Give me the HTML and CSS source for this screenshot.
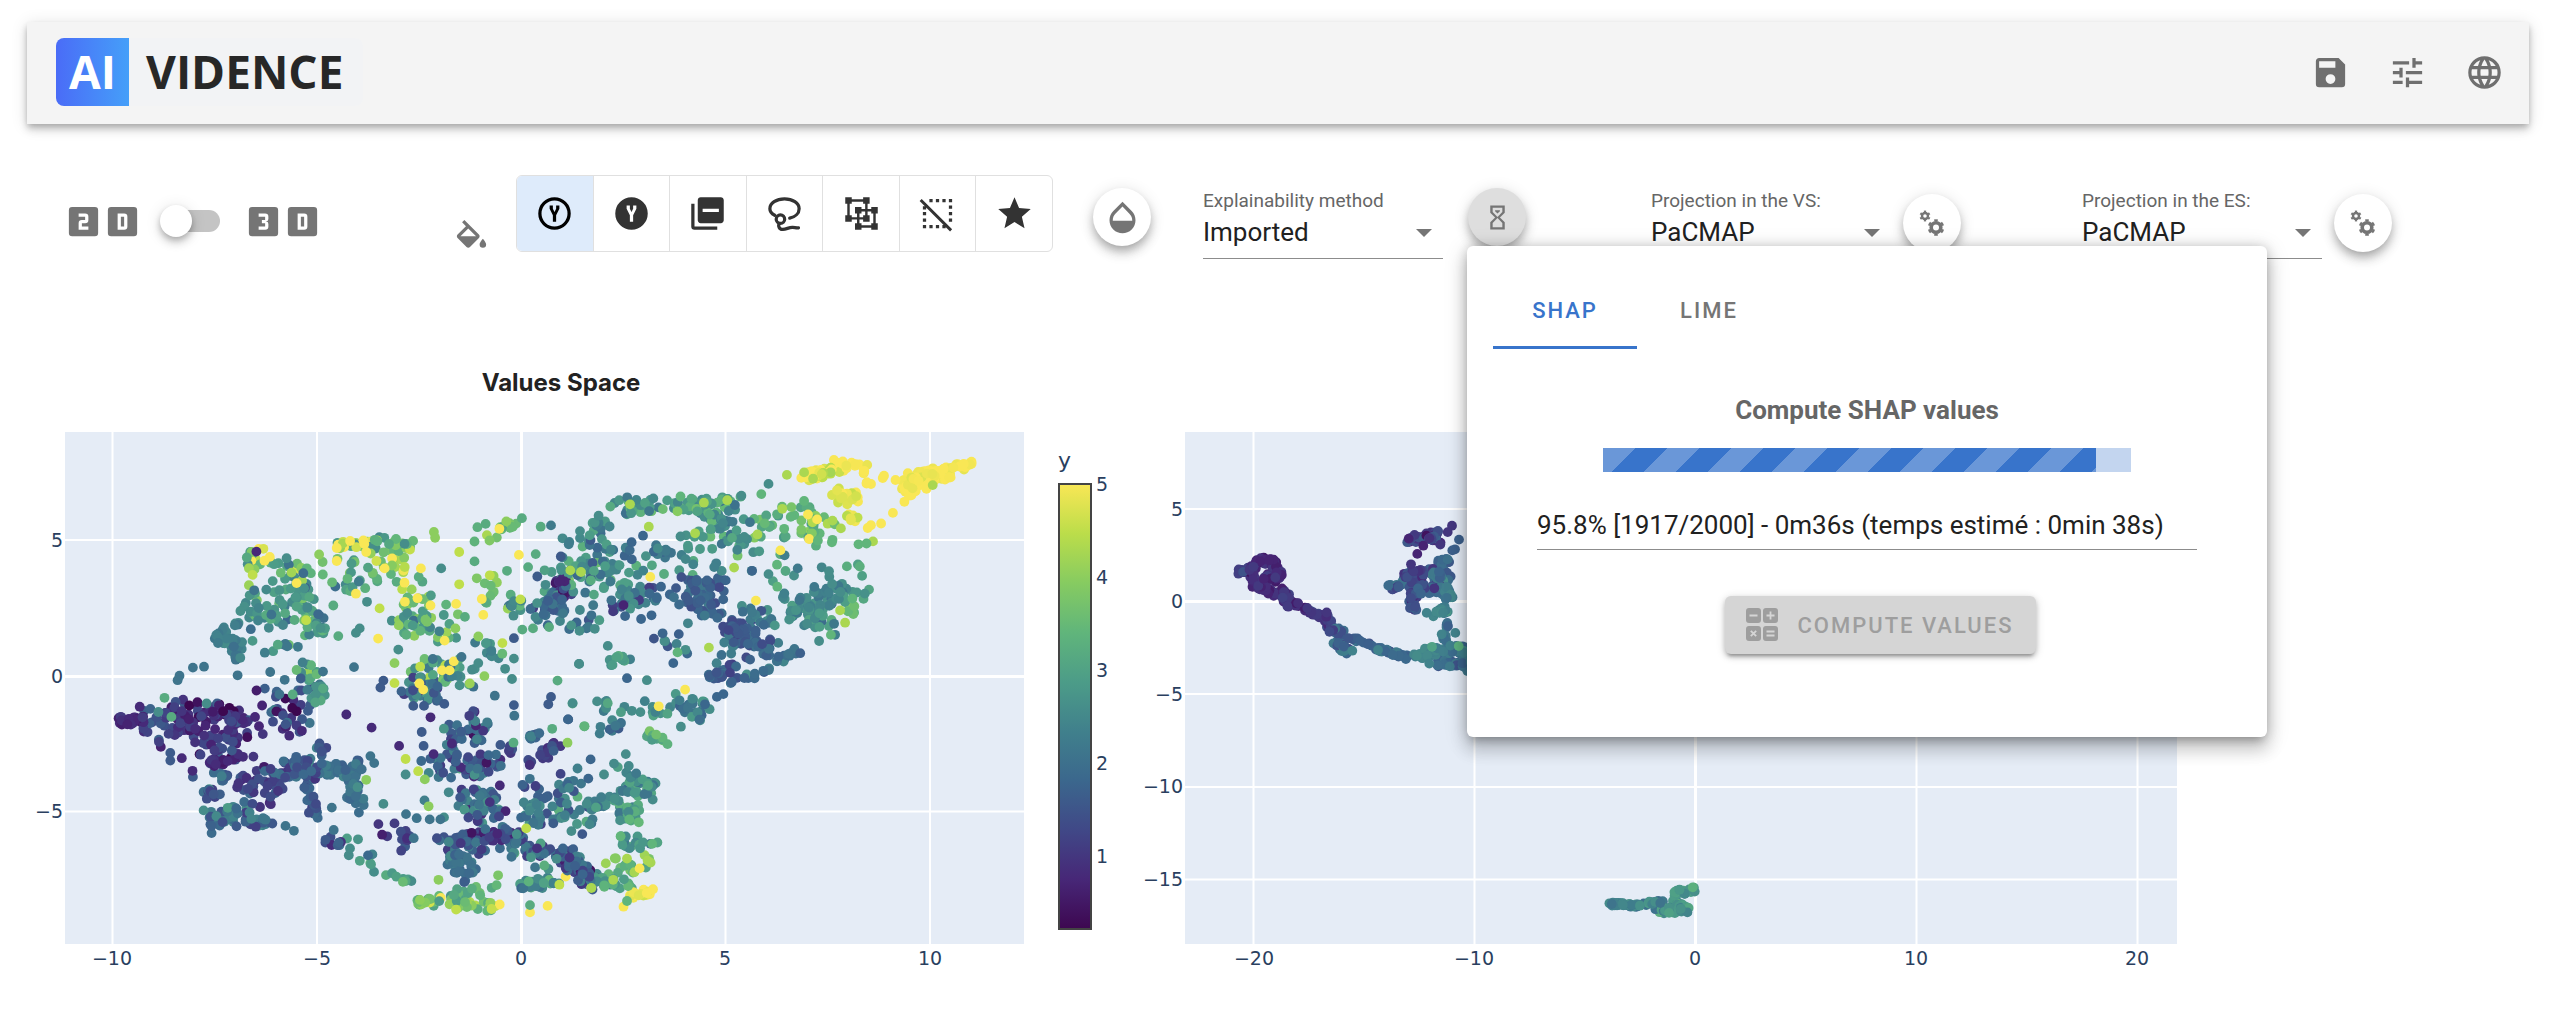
FILE: index.html
```html
<!DOCTYPE html>
<html lang="en">
<head>
<meta charset="utf-8">
<title>AI Vidence</title>
<link rel="stylesheet" href="styles.css">
</head>
<body>
<header class="app-bar">
  <a class="logo" href="#"><span class="logo-mark">AI</span><span class="logo-name">VIDENCE</span></a>
  <nav class="app-actions">
    <button class="icon-button" aria-label="Save"><svg class="icon" viewBox="0 0 24 24"><path d="M15,9H5V5H15M12,19A3,3 0 0,1 9,16A3,3 0 0,1 12,13A3,3 0 0,1 15,16A3,3 0 0,1 12,19M17,3H5C3.89,3 3,3.9 3,5V19A2,2 0 0,0 5,21H19A2,2 0 0,0 21,19V7L17,3Z"/></svg></button>
    <button class="icon-button" aria-label="Settings"><svg class="icon" viewBox="0 0 24 24"><path d="M3,17V19H9V17H3M3,5V7H13V5H3M13,21V19H21V17H13V15H11V21H13M7,9V11H3V13H7V15H9V9H7M21,13V11H11V13H21M15,9H17V7H21V5H17V3H15V9Z"/></svg></button>
    <button class="icon-button" aria-label="Language"><svg class="icon" viewBox="0 0 24 24"><path d="M16.36,14C16.44,13.34 16.5,12.68 16.5,12C16.5,11.32 16.44,10.66 16.36,10H19.74C19.9,10.64 20,11.31 20,12C20,12.69 19.9,13.36 19.74,14M14.59,19.56C15.19,18.45 15.65,17.25 15.97,16H18.92C17.96,17.65 16.43,18.93 14.59,19.56M14.34,14H9.66C9.56,13.34 9.5,12.68 9.5,12C9.5,11.32 9.56,10.65 9.66,10H14.34C14.43,10.65 14.5,11.32 14.5,12C14.5,12.68 14.43,13.34 14.34,14M12,19.96C11.17,18.76 10.5,17.43 10.09,16H13.91C13.5,17.43 12.83,18.76 12,19.96M8,8H5.08C6.03,6.34 7.57,5.06 9.4,4.44C8.8,5.55 8.35,6.75 8,8M5.08,16H8C8.35,17.25 8.8,18.45 9.4,19.56C7.57,18.93 6.03,17.65 5.08,16M4.26,14C4.1,13.36 4,12.69 4,12C4,11.31 4.1,10.64 4.26,10H7.64C7.56,10.66 7.5,11.32 7.5,12C7.5,12.68 7.56,13.34 7.64,14M12,4.03C12.83,5.23 13.5,6.57 13.91,8H10.09C10.5,6.57 11.17,5.23 12,4.03M18.92,8H15.97C15.65,6.75 15.19,5.55 14.59,4.44C16.43,5.07 17.96,6.34 18.92,8M12,2C6.47,2 2,6.5 2,12A10,10 0 0,0 12,22A10,10 0 0,0 22,12A10,10 0 0,0 12,2Z"/></svg></button>
  </nav>
</header>

<main>
<div class="toolbar">
  <div class="dimension">
    <span class="dimension-label">
      <svg class="icon" viewBox="0 0 24 24"><path d="M19,3A2,2 0 0,1 21,5V19A2,2 0 0,1 19,21H5A2,2 0 0,1 3,19V5A2,2 0 0,1 5,3H19M15,11V9A2,2 0 0,0 13,7H9V9H13V11H11A2,2 0 0,0 9,13V17H15V15H11V13H13A2,2 0 0,0 15,11Z"/></svg>
      <svg class="icon" viewBox="0 0 24 24"><path fill-rule="evenodd" d="M19,3A2,2 0 0,1 21,5V19A2,2 0 0,1 19,21H5A2,2 0 0,1 3,19V5A2,2 0 0,1 5,3H19M9,7V17H13A2,2 0 0,0 15,15V9A2,2 0 0,0 13,7H9M11,9H13V15H11V9Z"/></svg>
    </span>
    <input class="switch" type="checkbox" role="switch" aria-label="3D view">
    <span class="dimension-label">
      <svg class="icon" viewBox="0 0 24 24"><path fill-rule="evenodd" d="M19,3A2,2 0 0,1 21,5V19A2,2 0 0,1 19,21H5A2,2 0 0,1 3,19V5A2,2 0 0,1 5,3H19M15,15V13.5A1.5,1.5 0 0,0 13.5,12A1.5,1.5 0 0,0 15,10.5V9A2,2 0 0,0 13,7H9V9H13V11H11V13H13V15H9V17H13A2,2 0 0,0 15,15Z"/></svg>
      <svg class="icon" viewBox="0 0 24 24"><path fill-rule="evenodd" d="M19,3A2,2 0 0,1 21,5V19A2,2 0 0,1 19,21H5A2,2 0 0,1 3,19V5A2,2 0 0,1 5,3H19M9,7V17H13A2,2 0 0,0 15,15V9A2,2 0 0,0 13,7H9M11,9H13V15H11V9Z"/></svg>
    </span>
  </div>

  <svg class="icon fill-icon" viewBox="0 0 24 24"><path fill-rule="evenodd" d="M19,11.5C19,11.5 17,13.67 17,15A2,2 0 0,0 19,17A2,2 0 0,0 21,15C21,13.67 19,11.5 19,11.5M5.21,10L10,5.21L14.79,10M16.56,8.94L7.62,0L6.21,1.41L8.59,3.79L3.44,8.94C2.85,9.5 2.85,10.47 3.44,11.06L8.94,16.56C9.23,16.85 9.62,17 10,17C10.38,17 10.77,16.85 11.06,16.56L16.56,11.06C17.15,10.47 17.15,9.5 16.56,8.94Z"/></svg>

  <div class="color-modes" role="group" aria-label="Colour by">
    <button class="mode mode-active" aria-label="Target"><svg class="icon" viewBox="0 0 24 24"><path d="M9,7V9L11,13V17H13V13L15,9V7H13V9L12,11L11,9V7H9M12,2A10,10 0 0,1 22,12A10,10 0 0,1 12,22A10,10 0 0,1 2,12A10,10 0 0,1 12,2M12,4A8,8 0 0,0 4,12A8,8 0 0,0 12,20A8,8 0 0,0 20,12A8,8 0 0,0 12,4Z"/></svg></button>
    <button class="mode" aria-label="Prediction"><svg class="icon" viewBox="0 0 24 24"><path fill-rule="evenodd" d="M12,2A10,10 0 0,1 22,12A10,10 0 0,1 12,22A10,10 0 0,1 2,12A10,10 0 0,1 12,2M9,7V9L11,13V17H13V13L15,9V7H13V9L12,11L11,9V7H9Z"/></svg></button>
    <button class="mode" aria-label="Residual"><svg class="icon" viewBox="0 0 24 24"><path d="M4,20H18V22H4A2,2 0 0,1 2,20V6H4V20M20.22,2H7.78C6.8,2 6,2.8 6,3.78V16.22C6,17.2 6.8,18 7.78,18H20.22C21.2,18 22,17.2 22,16.22V3.78C22,2.8 21.2,2 20.22,2M19,11H9V9H19V11Z"/></svg></button>
    <button class="mode" aria-label="Selection"><svg class="icon icon-line" viewBox="0 0 24 24"><path d="M6,13.1C4.1,12.1 3,10.6 3,9C3,5.6 7,3 12,3S21,5.6 21,9C21,11.8 18.6,14.1 15.2,14.8"/><circle cx="9.5" cy="15.5" r="2.6"/><path d="M8.6,18C8.1,19.8 8.6,22 11,21.8C13.4,21.6 14.8,20.5 17,20.6C18.6,20.7 19.4,21 20.6,20.8"/></svg></button>
    <button class="mode" aria-label="Regions"><svg class="icon" viewBox="0 0 24 24"><path fill="none" stroke="currentColor" stroke-width="1.5" d="M4,4H15V15H4ZM10,10H20V20H10Z"/><path d="M2,2H6V6H2ZM13,2H17V6H13ZM2,13H6V17H2ZM13,13H17V17H13ZM8,8H12V12H8ZM18,8H22V12H18ZM8,18H12V22H8ZM18,18H22V22H18Z"/></svg></button>
    <button class="mode" aria-label="Not selected"><svg class="icon" viewBox="0 0 24 24"><path d="M1,4.27L2.28,3L21,21.72L19.73,23L1,4.27M7,3H9V5H7ZM11,3H13V5H11ZM15,3H17V5H15ZM19,3H21V5H19ZM19,7H21V9H19ZM19,11H21V13H19ZM19,15H21V17H19ZM3,7.5H5V9.5H3ZM3,11H5V13H3ZM3,15H5V17H3ZM3,19H5V21H3ZM7,19H9V21H7ZM11,19H13V21H11ZM15,19H17V21H15Z"/></svg></button>
    <button class="mode" aria-label="Favourites"><svg class="icon" viewBox="0 0 24 24"><path d="M12,17.27L18.18,21L16.54,13.97L22,9.24L14.81,8.62L12,2L9.19,8.62L2,9.24L7.45,13.97L5.82,21L12,17.27Z"/></svg></button>
  </div>

  <button class="fab opacity-button" aria-label="Opacity"><svg class="icon" viewBox="0 0 24 24"><path d="M17.66,8L12,2.35L6.34,8C4.78,9.56 4,11.64 4,13.64C4,15.64 4.78,17.75 6.34,19.31C7.9,20.87 9.95,21.66 12,21.66C14.05,21.66 16.1,20.87 17.66,19.31C19.22,17.75 20,15.64 20,13.64C20,11.64 19.22,9.56 17.66,8M6,14C6,12 6.62,10.73 7.76,9.6L12,5.27L16.24,9.65C17.38,10.77 18,12 18,14H6Z"/></svg></button>

  <div class="field method-field">
    <label for="method">Explainability method</label>
    <select id="method"><option>Imported</option></select>
  </div>

  <div class="compute">
    <button class="fab fab-pressed" aria-label="Compute" aria-expanded="true"><svg class="icon-small" viewBox="0 0 24 24"><path d="M6,2H18V8L14,12L18,16V22H6V16L10,12L6,8V2M16,16.5L12,12.5L8,16.5V20H16V16.5M12,11.5L16,7.5V4H8V7.5L12,11.5M10,6H14V6.75L12,8.75L10,6.75V6Z"/></svg></button>
    <section class="popover">
      <div class="tabs" role="tablist">
        <button class="tab tab-active" role="tab" aria-selected="true">SHAP</button>
        <button class="tab" role="tab" aria-selected="false">LIME</button>
      </div>
      <h3 class="popover-title">Compute SHAP values</h3>
      <div class="progress" role="progressbar" aria-valuenow="95.8" aria-label="SHAP progress"><div class="progress-fill" style="width:93.4%"></div></div>
      <input class="status" type="text" readonly aria-label="Status" value="95.8% [1917/2000] - 0m36s (temps estimé : 0min 38s)">
      <button class="compute-button" disabled>
        <svg class="calc" viewBox="0 0 32 34"><path fill="currentColor" d="M3,0H12A3,3 0 0,1 15,3V12A3,3 0 0,1 12,15H3A3,3 0 0,1 0,12V3A3,3 0 0,1 3,0ZM20,0H29A3,3 0 0,1 32,3V12A3,3 0 0,1 29,15H20A3,3 0 0,1 17,12V3A3,3 0 0,1 20,0ZM3,18H12A3,3 0 0,1 15,21V30A3,3 0 0,1 12,33H3A3,3 0 0,1 0,30V21A3,3 0 0,1 3,18ZM20,18H29A3,3 0 0,1 32,21V30A3,3 0 0,1 29,33H20A3,3 0 0,1 17,30V21A3,3 0 0,1 20,18Z"/><path fill="none" stroke="#d5d5d5" stroke-width="1.8" d="M3.5,7.5H11.5M20.5,7.5H28.5M24.5,3.5V11.5M4.8,22.8L10.2,28.2M10.2,22.8L4.8,28.2M20.5,23.5H28.5M20.5,27.5H28.5"/></svg>
        COMPUTE VALUES
      </button>
    </section>
  </div>

  <div class="field projection-field values-field">
    <label for="projection-vs">Projection in the VS:</label>
    <select id="projection-vs"><option>PaCMAP</option></select>
  </div>
  <button class="fab gears-button" aria-label="VS settings"><svg class="gears" viewBox="0 0 30 30"><use href="#gears"/></svg></button>

  <div class="field projection-field">
    <label for="projection-es">Projection in the ES:</label>
    <select id="projection-es"><option>PaCMAP</option></select>
  </div>
  <button class="fab gears-button" aria-label="ES settings"><svg class="gears" viewBox="0 0 30 30"><g id="gears" fill="none" stroke="currentColor"><circle cx="8" cy="8" r="3" stroke-width="2.4"/><circle cx="8" cy="8" r="4.6" stroke-width="1.8" pathLength="60" stroke-dasharray="4.8 5.2" stroke-dashoffset="7.4"/><circle cx="19" cy="19.5" r="4.8" stroke-width="3.6"/><circle cx="19" cy="19.5" r="7.2" stroke-width="2.2" pathLength="60" stroke-dasharray="4.8 5.2" stroke-dashoffset="7.4"/></g></svg></button>
</div>

<div class="charts">
  <figure class="chart">
    <h2 class="chart-title">Values Space</h2>
    <svg class="plot" viewBox="0 399 1122 601">
      <defs><linearGradient id="viridis" x1="0" y1="1" x2="0" y2="0"><stop offset="0" stop-color="#3d0750"/><stop offset=".111" stop-color="#472777"/><stop offset=".222" stop-color="#404887"/><stop offset=".333" stop-color="#3b678d"/><stop offset=".444" stop-color="#40808c"/><stop offset=".555" stop-color="#4c9c88"/><stop offset=".666" stop-color="#60b57b"/><stop offset=".777" stop-color="#86cb61"/><stop offset=".888" stop-color="#bbdd4a"/><stop offset="1" stop-color="#f9e755"/></linearGradient></defs>
      <rect class="plot-area" x="65" y="432" width="959" height="512"/>
      <path class="grid" d="M112.5,432V944M317,432V944M725.5,432V944M930,432V944M65,540H1024M65,811.5H1024"/>
      <path class="zero" d="M521.5,432V944M65,676.5H1024"/>
      <g class="points" id="values-points"></g>
      <g class="ticks ticks-x"><text x="112" y="965">−10</text><text x="317" y="965">−5</text><text x="521" y="965">0</text><text x="725" y="965">5</text><text x="930" y="965">10</text></g>
      <g class="ticks ticks-y"><text x="63" y="547">5</text><text x="63" y="683">0</text><text x="63" y="818">−5</text></g>
      <rect class="colorbar" x="1059" y="484" width="32" height="445"/>
      <text class="colorbar-title" x="1058" y="468">y</text>
      <g class="ticks"><text x="1096" y="491">5</text><text x="1096" y="584">4</text><text x="1096" y="677">3</text><text x="1096" y="770">2</text><text x="1096" y="863">1</text></g>
    </svg>
  </figure>
  <figure class="chart">
    <svg class="plot" viewBox="1122 399 1432 601">
      <rect class="plot-area" x="1185" y="432" width="992" height="512"/>
      <path class="grid" d="M1253.5,432V944M1474.5,432V944M1916.5,432V944M2137.5,432V944M1185,509H2177M1185,694H2177M1185,787H2177M1185,879.5H2177"/>
      <path class="zero" d="M1695.5,432V944M1185,601.5H2177"/>
      <g class="points" id="explanations-points"></g>
      <g class="ticks ticks-x"><text x="1254" y="965">−20</text><text x="1474" y="965">−10</text><text x="1695" y="965">0</text><text x="1916" y="965">10</text><text x="2137" y="965">20</text></g>
      <g class="ticks ticks-y"><text x="1183" y="516">5</text><text x="1183" y="608">0</text><text x="1183" y="701">−5</text><text x="1183" y="793">−10</text><text x="1183" y="886">−15</text></g>
    </svg>
  </figure>
</div>
</main>
<script src="charts.js"></script>
</body>
</html>
```
FILE: styles.css
```css
* { box-sizing: border-box; }
body { margin: 0; background: #fff; color: #212121; font-family: Roboto, "Liberation Sans", sans-serif; overflow-x: hidden; }
button { border: 0; padding: 0; background: none; font: inherit; color: inherit; cursor: pointer; }
.icon { display: block; flex: none; width: 39px; height: 39px; fill: currentColor; }
.icon-small { width: 29px; height: 29px; fill: currentColor; fill-rule: evenodd; }
.icon-line { fill: none; stroke: currentColor; stroke-width: 2; stroke-linecap: round; }

.app-bar { display: flex; align-items: center; justify-content: space-between; height: 102px; margin: 22px 25px 0 27px; padding: 0 25px 2px 29px; background: #f4f4f4; box-shadow: 0 3px 6px -1px rgba(0,0,0,.2), 0 6px 8px rgba(0,0,0,.14), 0 2px 16px rgba(0,0,0,.12); }
.logo { display: flex; height: 68px; width: 307px; border-radius: 8px; overflow: hidden; background: #f2f3f5; color: #272727; font: 700 46px/66px "Open Sans", sans-serif; text-decoration: none; }
.logo-mark { width: 73px; text-align: center; color: #fff; background: linear-gradient(90deg, #4a6cf7, #459ff9); }
.logo-name { padding-left: 17px; }
.app-actions { display: flex; gap: 38px; color: #6f6f6f; }

.toolbar { display: flex; align-items: center; height: 84px; margin-top: 51px; padding-left: 64px; color: #757575; }
.dimension { display: flex; align-items: center; margin-top: 8px; }
.dimension-label { display: flex; }
.switch { appearance: none; position: relative; width: 60px; height: 32px; margin: 0 24px 0 18px; }
.switch::before { content: ""; position: absolute; inset: 5px 0 5px 4px; border-radius: 11px; background: #c4c4c4; }
.switch::after { content: ""; position: absolute; top: 0; left: 0; width: 32px; height: 32px; border-radius: 50%; background: #fff; box-shadow: 0 3px 6px -1px rgba(0,0,0,.2), 0 6px 8px rgba(0,0,0,.14), 0 2px 16px rgba(0,0,0,.12); }
.fill-icon { align-self: flex-end; margin: 0 25px 0 130px; }
.color-modes { display: flex; align-self: flex-start; width: 537px; height: 77px; border: 1px solid #e0e0e0; border-radius: 6px; overflow: hidden; color: #333; }
.mode { display: flex; flex: 1; align-items: center; justify-content: center; }
.mode + .mode { border-left: 1px solid #e0e0e0; }
.mode-active { background: #deebfb; color: #000; }
.fab { display: flex; flex: none; align-items: center; justify-content: center; width: 58px; height: 58px; border-radius: 50%; background: #fff; box-shadow: 0 5px 8px -2px rgba(0,0,0,.2), 0 8px 12px rgba(0,0,0,.14), 0 2px 16px rgba(0,0,0,.12); }
.fab-pressed { background: #dedede; }
.opacity-button { margin-left: 40px; }
.gears { width: 30px; height: 30px; }
.gears-button { align-self: flex-end; margin: 0 0 7px 12px; }

.field { display: flex; flex-direction: column; align-self: flex-end; width: 240px; color: #666; }
.field label { font-size: 19px; line-height: 24px; }
.field select { appearance: none; width: 240px; height: 46px; padding: 0 0 8px; border: 0; border-bottom: 1px solid #8c8c8c; border-radius: 0; font: 26px/36px Roboto, sans-serif; color: #212121; background: url("data:image/svg+xml,%3Csvg xmlns='http://www.w3.org/2000/svg' width='16' height='8'%3E%3Cpath fill='%23757575' d='M0,0H16L8,8Z'/%3E%3C/svg%3E") no-repeat 213px 16px; }
.method-field { margin-left: 52px; }
.values-field { margin-left: 125px; }
.projection-field + .gears-button + .projection-field { margin-left: 121px; }
.compute { position: relative; margin-left: 25px; }

.popover { position: absolute; z-index: 2; top: 58px; left: -1px; display: flex; flex-direction: column; align-items: center; width: 800px; height: 491px; padding: 26px; border-radius: 6px; background: #fff; color: #666; box-shadow: 0 8px 8px -5px rgba(0,0,0,.2), 0 13px 16px 2px rgba(0,0,0,.14), 0 5px 22px 3px rgba(0,0,0,.12), 0 0 12px rgba(0,0,0,.16); }
.tabs { display: flex; align-self: stretch; height: 77px; }
.tab { width: 144px; padding-top: 3px; border-bottom: 3px solid transparent; color: #757575; font-size: 22px; font-weight: 500; letter-spacing: 2px; }
.tab-active { border-color: #3874cb; color: #3874cb; }
.popover-title { margin: 43px 0 0; font-size: 26px; font-weight: 700; line-height: 36px; }
.progress { width: 528px; height: 24px; margin-top: 20px; background: #c3d5ef; }
.progress-fill { height: 100%; background: #3874cb linear-gradient(135deg, rgba(255,255,255,.25) 25%, transparent 0, transparent 50%, rgba(255,255,255,.25) 0, rgba(255,255,255,.25) 75%, transparent 0) 0 0 / 64px 64px; }
.status { width: 660px; height: 52px; margin-top: 26px; padding: 2px 0 0; border: 0; border-bottom: 1px solid #8c8c8c; color: #212121; font: 26px/36px Roboto, sans-serif; }
.compute-button { display: flex; flex: none; align-items: center; justify-content: center; gap: 19px; width: 311px; height: 58px; margin: 46px 0 0 26px; border-radius: 6px; background: #d5d5d5; color: #9e9e9e; font-size: 22px; font-weight: 500; letter-spacing: 2px; white-space: nowrap; box-shadow: 0 5px 3px -3px rgba(0,0,0,.2), 0 3px 5px rgba(0,0,0,.2), 0 2px 10px rgba(0,0,0,.16); }
.calc { width: 32px; height: 34px; }

.charts { display: grid; grid-template-columns: 1122fr 1432fr; align-items: end; margin-top: 108px; }
.chart { min-width: 0; margin: 0; }
.chart-title { margin: 0; color: #222; font: 700 24px/32px Inter, sans-serif; text-align: center; }
.plot { display: block; width: 100%; }
.plot-area { fill: #e5ecf6; }
.grid { stroke: #fff; stroke-width: 2; }
.zero { stroke: #fff; stroke-width: 3; }
.ticks { fill: #2a3f5f; font: 19px "DejaVu Sans", sans-serif; }
.ticks-x { text-anchor: middle; }
.ticks-y { text-anchor: end; }
.colorbar { fill: url(#viridis); stroke: #444; stroke-width: 2; }
.colorbar-title { fill: #2a3f5f; font: 22px "DejaVu Sans", sans-serif; }
```
FILE: charts.js
```js
// Viridis colour scale over the target range
const VIRIDIS = [[61,7,80],[71,39,119],[64,72,135],[59,103,141],[64,128,140],[76,156,136],[96,181,123],[134,203,97],[187,221,74],[249,231,85]];
function colour(v) {
  const t = Math.max(0, Math.min(1, (v - 0.22) / 4.78)) * 9;
  const i = Math.min(8, Math.floor(t)), f = t - i;
  return "rgb(" + VIRIDIS[i].map((c, k) => Math.round(c + (VIRIDIS[i + 1][k] - c) * f)).join(",") + ")";
}
let seed = 20;
function random() {
  seed = (seed * 1664525 + 1013904223) % 4294967296;
  return seed / 4294967296;
}
// Each cluster: x1, y1, x2, y2, radius, count, target value, target spread
function sample(clusters, singles, project, spread) {
  const points = [];
  for (const [x1, y1, x2, y2, r, n, v, s] of clusters) {
    const reach = r > 15 ? r * spread : r;
    for (let i = 0; i < n; i++) {
      const t = random(), a = random() * 6.283, d = Math.sqrt(random()) * reach;
      const value = v + (random() + random() + random() - 1.5) * 1.9 * s;
      points.push([...project(x1 + (x2 - x1) * t + Math.cos(a) * d, y1 + (y2 - y1) * t + Math.sin(a) * d), value]);
    }
  }
  for (let i = points.length - 1; i > 0; i--) {
    const j = Math.floor(random() * (i + 1));
    [points[i], points[j]] = [points[j], points[i]];
  }
  for (const [v, list] of singles) {
    for (let i = 0; i < list.length; i += 2) points.push([...project(list[i], list[i + 1]), v]);
  }
  return points;
}
function draw(id, points) {
  document.getElementById(id).innerHTML += points.map(([x, y, v]) =>
    `<circle cx="${x.toFixed(1)}" cy="${y.toFixed(1)}" r="4.9" fill="${colour(v)}"/>`).join("");
}

const west = [
[652,480,662,620,12,13,3.3,.6],[655,490,800,560,20,22,3.7,.9],[700,585,820,600,28,16,2.9,.3],[640,630,830,655,24,42,2.7,.4],
[568,702,630,725,15,34,2.3,.15],[630,655,570,700,12,8,2.3,.2],[600,735,628,755,10,8,2.3,.2],[690,700,690,700,36,7,2.7,.4],
[800,550,815,690,22,18,2.8,.7],[820,680,860,690,14,8,2.9,.3],[775,710,812,840,30,26,2.7,.7],[820,845,845,845,18,12,2.9,.4],
[310,910,375,905,12,32,.75,.15],[365,880,420,950,22,12,1.3,.6],[440,905,520,935,26,36,.85,.3],[470,880,660,895,22,38,.9,.5],
[540,920,670,925,28,26,.9,.3],[520,970,640,980,24,24,1,.3],[545,1010,630,1005,12,20,.8,.2],[700,860,800,920,38,30,1.1,.5],
[550,1045,600,1050,14,8,1.7,.4],[530,1090,580,1080,14,10,1.7,.6],[550,1160,640,1130,22,30,2.1,.4],[640,1150,700,1165,15,18,1.8,.5],
[635,1060,735,1040,24,38,1.1,.4],[650,1110,720,1080,22,14,1.3,.5],[740,1030,830,1020,24,38,1.6,.4],[822,970,860,990,12,6,1.6,.4],
[840,1030,945,1020,16,34,2,.15],[905,1040,945,1115,20,30,2.1,.2],[800,1060,820,1145,15,20,1.7,.3],[830,1195,900,1210,10,8,1.5,.3],
[910,1210,1000,1275,20,10,2.5,.4],[1010,1280,1080,1305,12,8,3,.3],[1085,1345,1305,1365,14,48,3.7,.6],[1170,1330,1300,1320,14,14,3.3,.4],
[1010,1170,1060,1205,20,12,1.3,.4],[1160,1210,1240,1220,26,32,1.7,.5],[1175,1240,1230,1285,24,28,2,.2],[1210,1190,1350,1190,14,34,1,.3],
[1240,1100,1290,1150,35,42,1.7,.5],[1130,1010,1260,1020,34,42,1.9,.6],[1250,1030,1320,985,20,16,1.4,.4],[1160,945,1260,935,26,24,1.9,.5],
[1235,860,1255,950,16,10,1.6,.5],[1370,1020,1465,965,15,18,1.1,.4],[1380,945,1415,945,12,8,1.9,.4],[1370,1080,1500,1060,35,24,2,.5],
[1340,1140,1500,1120,38,26,2.2,.5],[1330,1180,1360,1230,26,14,2,.5],[1370,1225,1495,1235,15,24,1.6,.5],[1360,1315,1460,1300,14,30,2.5,.5],
[1500,1260,1560,1300,20,26,1.7,.9],[880,480,960,475,14,16,4.2,.8],[960,480,1080,470,16,26,3.4,.7],[870,550,1000,560,34,24,3.2,.6],
[1000,520,1100,510,28,16,3.8,.6],[1040,570,1100,610,34,12,3.7,.6],[1045,640,1110,690,34,26,3,.6],[1130,620,1200,720,40,17,3.2,.6],
[1070,830,1150,830,24,38,1.9,.6],[1100,790,1240,795,26,34,2.7,.8],[1250,470,1350,420,30,12,3.8,.5],[1260,540,1290,620,24,10,3.7,.5],
[1270,725,1310,750,14,10,2.3,.6],[1290,625,1380,615,20,9,3,.6],[1410,640,1480,605,24,36,2.1,.4],[1450,570,1490,590,16,16,.8,.5],
[1430,560,1540,550,34,18,3,.5],[1450,660,1560,640,34,16,2.3,.5],[1130,1110,1470,1180,50,20,2.2,.5],[1300,1250,1440,1260,30,10,2.3,.6]];
const east = [
[40,460,120,440,24,18,2.5,.4],[90,510,170,520,34,24,2.3,.4],[145,380,250,385,18,28,2.8,.5],[280,380,460,375,18,42,2.9,.4],
[370,400,460,430,26,34,2.6,.5],[245,490,290,490,15,12,2.1,.2],[330,470,450,470,28,14,3,.4],[430,470,600,430,36,28,3.2,.6],
[610,400,690,450,32,32,3.7,.4],[635,310,720,300,14,42,4.9,.4],[720,280,810,295,14,20,5,.2],[715,360,765,360,18,20,4.9,.2],
[855,310,800,330,6,5,5,.1],[880,335,950,340,18,22,5,.1],[905,310,1075,282,9,40,5,.1],[920,315,1020,305,12,26,5,.1],
[745,400,810,430,12,9,4.8,.3],[750,500,790,600,20,9,3,.3],[590,630,730,600,28,62,2.5,.25],[650,660,720,680,20,20,2.7,.3],
[750,630,770,645,14,8,3.7,.3],[310,590,430,595,30,52,1.8,.25],[140,620,250,600,24,32,2,.5],[350,630,420,655,18,12,1.8,.2],
[440,690,500,695,26,38,1.7,.3],[480,640,565,665,20,17,2.2,.4],[500,740,560,730,22,20,1.8,.3],[570,762,620,735,12,12,2.1,.2],
[395,800,450,780,14,18,1.7,.3],[440,820,540,785,13,12,1.9,.3],[300,865,380,885,22,26,2.2,.4],[130,765,180,750,15,10,2.9,.3],
[100,860,260,885,18,17,2.6,.4],[100,945,155,905,16,8,2.3,.3],[220,940,295,960,15,11,3.3,.4],[135,990,180,1040,18,6,2.6,.4],
[70,1120,160,1090,14,22,2.5,.4],[160,1060,245,1080,18,30,2.6,.4],[155,1130,220,1140,22,24,2.8,.4],[150,1200,240,1210,16,16,2.8,.5],
[135,1270,230,1260,20,18,3.8,.5],[0,1240,80,1300,20,32,1.5,.5],[95,1300,180,1310,14,22,3,.4],[185,1335,240,1328,9,18,5,.2],
[30,550,200,560,40,22,2.7,.5],[0,460,60,600,34,18,2.8,.6],[0,1080,60,1170,30,14,2.5,.4],[270,680,420,740,40,13,2.3,.4],
[510,520,700,570,36,11,2.8,.4],[220,520,440,540,34,14,2.4,.5]];
const westSingles = [
[5, [880,485,915,468,952,475,957,495,880,517,930,597,1005,535,1100,535,1057,570,1058,617,1091,608,1125,626,1192,622,988,707,1162,712,1259,610,1263,649,1305,438,1356,502,775,571,705,507,1155,785,1175,785,1186,763,1096,817,1106,832,1478,1290,1431,1362,1385,1378,1545,1318]],
[4.5, [660,551,992,633,1200,495,1200,574,1031,816,1060,1002,1093,1032,1360,611,1280,552,1313,718,1375,1172,1192,1371,1462,1310,1098,776,800,662]],
[4, [834,501,1134,446,1137,460,1250,702,1120,1118,1190,682,1031,767,1266,799,957,1053,1483,962,1110,1052,1323,420,1146,1298]],
[3.2, [1269,426,1364,412,1413,433,1325,541,1400,500,1240,518,1380,532,1365,685,1393,682,1435,679,1457,810,1443,928,1342,962,1215,654,884,701,871,626,765,844,448,899,430,852,1496,866,1527,922,1385,1360]],
[2.6, [1153,535,1250,767,1320,781,1338,806,1343,756,1342,651,1041,734,959,617,940,682,930,693,749,510,532,1128,540,866,414,887,1002,1112,1060,1040,1513,769]],
[2.1, [504,778,533,776,469,798,464,809,621,797,706,789,744,808,844,788,925,777,1293,847,1131,757,1206,752,978,1012,968,995,867,1121,746,1166,768,1178,872,1176,1061,1137,1089,1147,1123,1150,1151,1150,1081,1196,1344,896]],
[1.6, [1343,706,1404,555,1343,870,1440,850,1433,868,1485,905,1161,867,1080,872,1108,872,1107,970,1102,936,1002,810,994,827,445,987,445,1006,504,1046,618,1167]],
[.8, [905,893,971,925,1043,970,1125,900,1181,964,1306,1067,365,874,503,1031,475,1000,789,933,756,945,670,494,1470,560,1480,568,1460,568,1133,990]]];
const eastSingles = [
[5, [870,399,839,425,900,372,804,436,512,614,576,491,236,556,327,832,258,873,648,403,672,415,166,1364,208,1270,243,1321,651,463]],
[4.3, [455,533,389,729,516,452,183,378,232,433,437,368,376,374,353,449,818,469,712,418,734,437,732,638,745,668,581,389,974,331,593,306,139,1298,229,1251,638,300,175,1246,82,1318,27,540,55,544]],
[3.4, [315,359,780,476,801,474,764,609,708,698,567,526,568,580,674,467,712,465,638,370,586,438,307,741,64,922,241,1210,175,1350,526,353,603,409,181,1150]],
[2.6, [545,328,474,357,703,542,733,593,711,573,677,713,501,541,545,549,227,809,97,861,50,769,91,683,51,688,273,713,125,725,115,1040,172,990,33,865,316,923,315,457,101,406]],
[1.8, [217,455,187,471,175,804,296,767,268,694,264,580,212,659,170,652,21,905,74,1050,239,650,491,720,80,1003,410,850,427,843,502,541]],
[.7, [12,567,0,567,166,625]]];
const values = sample(west, westSingles, (x, y) => [x / 2.6133, 350 + y / 2.45], 1.3)
  .concat(sample(east, eastSingles, (x, y) => [560 + x / 2.6133, 350 + y / 2.45], 1.25));
draw("values-points", values);

const arcs = [
[325,425,360,420,9,20,1.2,.3],[380,390,430,398,10,26,.8,.15],[370,405,365,450,10,22,.8,.15],[430,400,450,440,12,24,.8,.2],[405,440,440,445,12,26,.8,.2],
[370,460,440,490,10,30,.8,.15],[460,480,480,515,14,22,.9,.2],[485,510,575,552,7,24,1,.25],[585,545,600,580,12,20,1.2,.2],[600,585,640,595,12,28,1.6,.25],
[620,620,650,645,12,26,1.8,.25],[650,605,730,632,5,11,1.8,.2],[735,638,835,665,7,32,1.9,.2],[855,664,900,655,9,16,2.4,.2],[890,645,940,650,12,18,2.3,.2],
[940,640,1010,645,12,34,2.2,.3],[930,680,1030,690,14,36,1.9,.2],[1000,640,1020,700,12,20,2.1,.2],[838,335,930,320,12,34,1.2,.4],[905,325,925,345,10,12,1.1,.3],
[775,470,825,455,8,18,1.7,.5],[820,435,900,425,14,30,1.2,.3],[850,460,848,535,12,36,1.4,.3],[850,475,930,470,16,34,1.5,.3],[905,430,948,440,18,46,1.9,.3],
[938,470,955,495,14,36,2.2,.2],[920,400,962,392,8,16,1.9,.3],[915,550,948,530,12,22,2.4,.3],[945,565,955,580,6,5,1.8,.2],[940,600,948,620,6,6,2.1,.2]];
const arcSingles = [
[1, [966,296,953,314,931,349,843,404,590,539]],
[1.7, [987,335,975,362,967,365,954,577,714,627]],
[2.4, [890,540,667,646,744,644,935,600,976,596,898,682]],
[.7, [836,332,880,352,862,375,401,445]],
[3, [906,635]],[3.3, [986,633]]];
const tail = [
[272,522,335,526,6,44,2.4,.2],[335,522,382,512,5,14,2.2,.3],[368,540,430,542,10,40,2.7,.3],[398,520,428,530,8,16,2.7,.3],[400,490,438,480,9,20,2.8,.2]];
draw("explanations-points", sample(arcs, arcSingles, (x, y) => [1130 + x / 3, 420 + y / 2.8], 1)
  .concat(sample(tail, [[2.1, [272,522,372,519]], [3.3, [439,472]]], (x, y) => [1480 + x / 2.063, 730 + y / 3], 1)));
```
